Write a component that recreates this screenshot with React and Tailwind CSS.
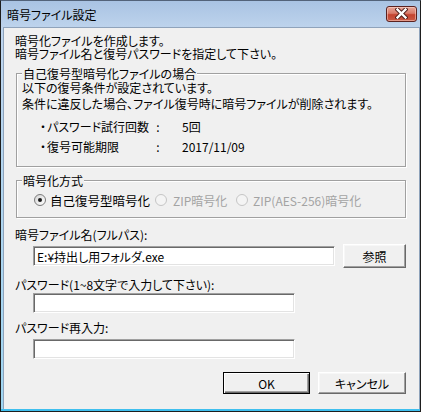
import React from "react";

function Radio({ checked, disabled }) {
  return (
    <span
      className={
        "w-[12px] h-[12px] rounded-full border flex items-center justify-center shrink-0 " +
        (disabled
          ? "border-[#c5c5c5] bg-[#f4f4f4]"
          : "border-[#7b7b7b] bg-[linear-gradient(135deg,#d6d6d6,#ffffff)]")
      }
    >
      {checked && <span className="w-[4px] h-[4px] rounded-full bg-[#1a1a1a]" />}
    </span>
  );
}

const sunken =
  "bg-white border border-t-[#a0a0a0] border-l-[#a0a0a0] border-r-white border-b-white shadow-[inset_1px_1px_0_#696969,inset_-1px_-1px_0_#e3e3e3]";
const raised =
  "bg-[#f0f0f0] border border-t-white border-l-white border-r-[#696969] border-b-[#696969] shadow-[inset_-1px_-1px_0_#a0a0a0,inset_1px_1px_0_#f7f7f7] flex items-center justify-center";

export default function App() {
  return (
    <div className="w-[421px] h-[412px] flex flex-col border border-[#1e1e1e] border-t-[#53637a] bg-[#b9d1ea] text-[12px] leading-[13px] text-black font-['Noto_Sans_CJK_JP','Noto_Sans',sans-serif] [font-feature-settings:'palt']">
      {/* title bar */}
      <div className="h-[26px] shrink-0 flex items-center justify-between pl-[6px] pr-[3px] bg-[linear-gradient(to_bottom,#a9c3e3,#bdd3ec)]">
        <span className="text-[12px] mt-[1px]">暗号ファイル設定</span>
        <div className="w-[31px] h-[16px] mt-[-1px] rounded-[3px] border border-[#5b2220] bg-[linear-gradient(to_bottom,#e7a799_0%,#d97a69_45%,#c4432f_55%,#c95a45_100%)] shadow-[inset_0_0_0_1px_rgba(255,220,210,0.5)] flex items-center justify-center">
          <svg width="13" height="11" viewBox="0 0 13 11">
            <path d="M2.5 1.5 L10.5 9.5 M10.5 1.5 L2.5 9.5" stroke="#4a1a16" strokeWidth="4.2" strokeLinecap="square" />
            <path d="M2.5 1.5 L10.5 9.5 M10.5 1.5 L2.5 9.5" stroke="#ffffff" strokeWidth="2.4" strokeLinecap="square" />
          </svg>
        </div>
      </div>

      {/* frame body */}
      <div className="flex-1 flex pl-[2px] pr-[1px] border-r-2 border-b-2 border-[#3fbfee] bg-[linear-gradient(to_bottom,#bfd5ee,#9fd6f2)]">
        <div className="flex-1 flex flex-col bg-[#f0f0f0] border border-[#8fa3bb] border-b-0 pl-[11px] pr-[13px]">
          {/* intro */}
          <div className="mt-[6px]">
            <div>暗号化ファイルを作成します。</div>
            <div>暗号ファイル名と復号パスワードを指定して下さい。</div>
          </div>

          {/* group 1 */}
          <div className="relative mt-[13px] ml-[1px] h-[94px] border border-[#a0a0a0] shadow-[inset_1px_1px_0_#fff,1px_1px_0_#fff] pl-[5px] pt-[6px]">
            <span className="absolute -top-[7px] left-[5px] px-[1px] bg-[#f0f0f0]">自己復号型暗号化ファイルの場合</span>
            <div className="leading-[16px]">以下の復号条件が設定されています。</div>
            <div className="leading-[16px]">条件に違反した場合、ファイル復号時に暗号ファイルが削除されます。</div>
            <div className="flex leading-[20px] ml-[17px] mt-[5px]">
              <span className="w-[8px] text-center">・</span>
              <span className="w-[105px]">パスワード試行回数</span>
              <span className="w-[12px] text-center">:</span>
              <span className="ml-[18px]">5回</span>
            </div>
            <div className="flex leading-[20px] ml-[17px]">
              <span className="w-[8px] text-center">・</span>
              <span className="w-[105px]">復号可能期限</span>
              <span className="w-[12px] text-center">:</span>
              <span className="ml-[18px]">2017/11/09</span>
            </div>
          </div>

          {/* group 2 */}
          <div className="relative mt-[13px] ml-[1px] h-[38px] border border-[#a0a0a0] shadow-[inset_1px_1px_0_#fff,1px_1px_0_#fff] pt-[9px] pl-[17px]">
            <span className="absolute -top-[7px] left-[5px] px-[1px] bg-[#f0f0f0]">暗号化方式</span>
            <div className="flex items-center h-[20px]">
              <div className="w-[121px] flex items-center">
                <Radio checked />
                <span className="ml-[4px] text-[12.5px]">自己復号型暗号化</span>
              </div>
              <div className="w-[81px] flex items-center">
                <Radio disabled />
                <span className="ml-[6px] text-[#a3a3a3]">ZIP暗号化</span>
              </div>
              <div className="flex items-center">
                <Radio disabled />
                <span className="ml-[5px] text-[#a3a3a3]">ZIP(AES-256)暗号化</span>
              </div>
            </div>
          </div>

          {/* file name */}
          <div className="mt-[10px]">暗号ファイル名(フルパス):</div>
          <div className="mt-[3px] h-[24px] flex items-center">
            <div className={"ml-[18px] w-[302px] h-[20px] flex items-center pl-[3px] " + sunken}>
              E:¥持出し用フォルダ.exe
            </div>
            <div className={"ml-[8px] w-[63px] h-[24px] " + raised}>参照</div>
          </div>

          {/* password */}
          <div className="mt-[10px]">パスワード(1~8文字で入力して下さい):</div>
          <div className={"mt-[2px] ml-[18px] w-[262px] h-[20px] " + sunken} />

          <div className="mt-[8px]">パスワード再入力:</div>
          <div className={"mt-[5px] ml-[18px] w-[262px] h-[20px] " + sunken} />

          {/* buttons */}
          <div className="mt-[13px] flex">
            <div className="ml-[208px] w-[87px] h-[22px] bg-[#f0f0f0] border border-black shadow-[inset_1px_1px_0_#fff,inset_-1px_-1px_0_#696969,inset_-2px_-2px_0_#a0a0a0] flex items-center justify-center">
              OK
            </div>
            <div className={"ml-[8px] w-[88px] h-[22px] " + raised}>キャンセル</div>
          </div>
        </div>
      </div>
    </div>
  );
}
